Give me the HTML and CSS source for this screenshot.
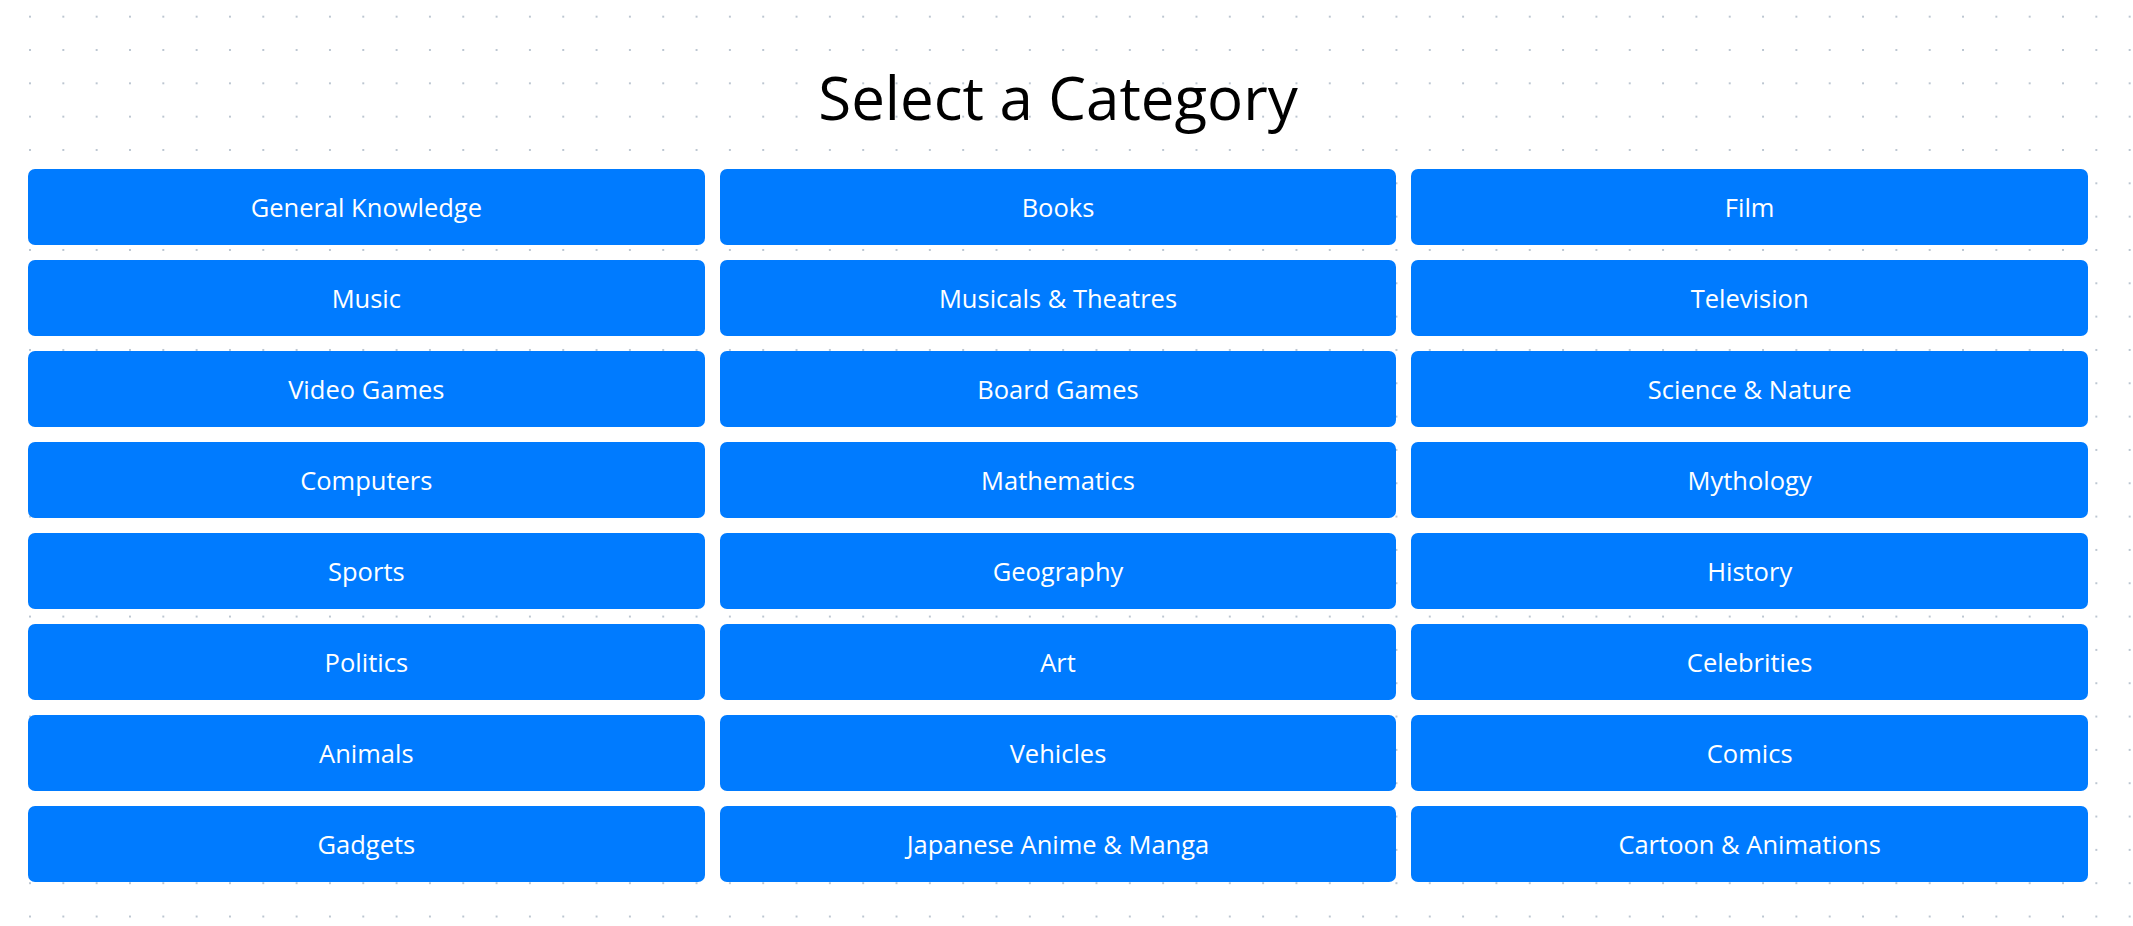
FILE: index.html
```html
<!DOCTYPE html>
<html lang="en">
<head>
<meta charset="utf-8">
<title>Select a Category</title>
<link rel="stylesheet" href="styles.css">
</head>
<body>
<main class="page">
  <h1 class="title">Select a Category</h1>
  <div class="grid">
    <button class="cat">General Knowledge</button>
    <button class="cat">Books</button>
    <button class="cat">Film</button>
    <button class="cat">Music</button>
    <button class="cat">Musicals &amp; Theatres</button>
    <button class="cat">Television</button>
    <button class="cat">Video Games</button>
    <button class="cat">Board Games</button>
    <button class="cat">Science &amp; Nature</button>
    <button class="cat">Computers</button>
    <button class="cat">Mathematics</button>
    <button class="cat">Mythology</button>
    <button class="cat">Sports</button>
    <button class="cat">Geography</button>
    <button class="cat">History</button>
    <button class="cat">Politics</button>
    <button class="cat">Art</button>
    <button class="cat">Celebrities</button>
    <button class="cat">Animals</button>
    <button class="cat">Vehicles</button>
    <button class="cat">Comics</button>
    <button class="cat">Gadgets</button>
    <button class="cat">Japanese Anime &amp; Manga</button>
    <button class="cat">Cartoon &amp; Animations</button>
  </div>
</main>
</body>
</html>
```

FILE: styles.css
```css
html, body {
  margin: 0;
  padding: 0;
}
body {
  min-height: 926px;
  background-color: #ffffff;
  background-image: radial-gradient(circle at center, #bcc6d1 1px, rgba(255,255,255,0) 1.5px);
  background-size: 33.333px 33.333px;
  background-position: 13.333px 0;
  font-family: "Open Sans", "Noto Sans", sans-serif;
}
.page {
  padding: 0 45px 0 28px;
}
.title {
  margin: 0 0 37px;
  padding-top: 62px;
  text-align: center;
  font-size: 60px;
  font-weight: 500;
  line-height: 70px;
  color: #000;
}
.grid {
  display: grid;
  grid-template-columns: repeat(3, 1fr);
  grid-auto-rows: 76px;
  gap: 15px;
}
.cat {
  border: 0;
  border-radius: 7px;
  background: #007bff;
  color: #fff;
  font-family: "Open Sans", "Noto Sans", sans-serif;
  font-size: 25.5px;
  padding: 0;
  cursor: pointer;
}
```
